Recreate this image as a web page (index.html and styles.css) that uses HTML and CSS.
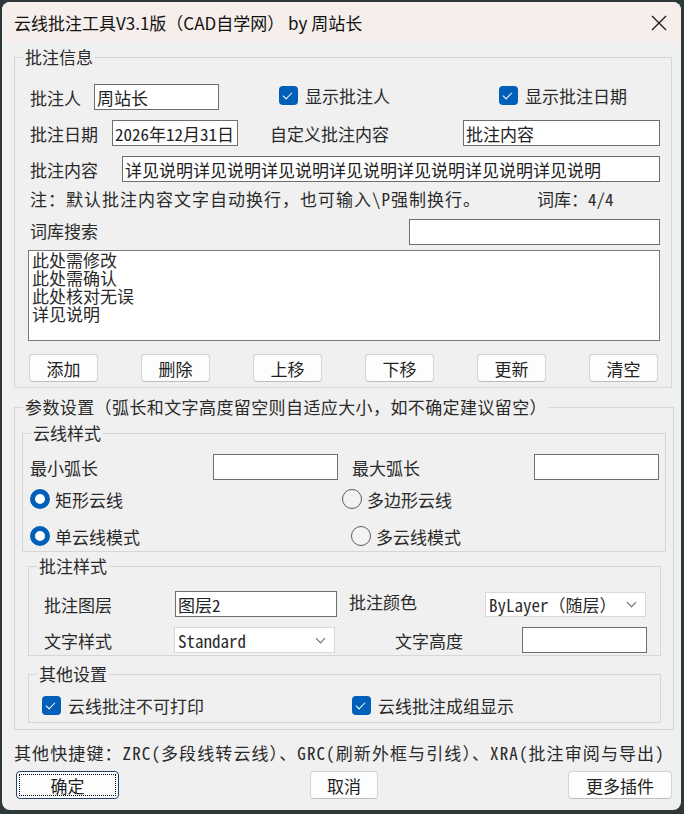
FILE: index.html
```html
<!DOCTYPE html>
<html lang="zh-CN">
<head>
    <meta charset="UTF-8">
    <meta name="viewport" content="width=device-width, initial-scale=1.0">
    <title>云线批注工具V3.1版</title>
    <link rel="stylesheet" href="styles.css">
</head>
<body>
    <div class="window">
        <div class="titlebar">
            <span class="title">云线批注工具V3.1版（CAD自学网） by 周站长</span>
            <svg class="close" width="16" height="16" viewBox="0 0 16 16"><path d="M1 1 L15 15 M15 1 L1 15" stroke="#1a1a1a" stroke-width="1.3" fill="none"/></svg>
        </div>

        <div class="content">
            <fieldset class="group g-info">
                <legend>批注信息</legend>
                <div class="row r1">
                    <span class="lbl" style="width:64px">批注人</span>
                    <input class="box" style="width:125px" type="text" value="周站长">
                    <label class="check" style="margin-left:60px;width:220px"><span class="cb"></span>显示批注人</label>
                    <label class="check"><span class="cb"></span>显示批注日期</label>
                </div>
                <div class="row r2">
                    <span class="lbl" style="width:82px">批注日期</span>
                    <input class="box" style="width:126px" type="text" value="2026年12月31日">
                    <span class="lbl" style="margin-left:32px;width:193px">自定义批注内容</span>
                    <input class="box" style="width:197px" type="text" value="批注内容">
                </div>
                <div class="row r3">
                    <span class="lbl" style="width:92px">批注内容</span>
                    <input class="box" style="width:538px" type="text" value="详见说明详见说明详见说明详见说明详见说明详见说明详见说明">
                </div>
                <div class="row note">
                    <span class="spaced" style="width:507px">注：默认批注内容文字自动换行，也可输入\P强制换行。</span>
                    <span>词库：4/4</span>
                </div>
                <div class="row r5">
                    <span class="lbl" style="width:379px">词库搜索</span>
                    <input class="box" style="width:251px" type="text">
                </div>
                <ul class="listbox">
                    <li>此处需修改</li>
                    <li>此处需确认</li>
                    <li>此处核对无误</li>
                    <li>详见说明</li>
                </ul>
                <div class="btnrow">
                    <button>添加</button>
                    <button>删除</button>
                    <button>上移</button>
                    <button>下移</button>
                    <button>更新</button>
                    <button>清空</button>
                </div>
            </fieldset>

            <fieldset class="group g-param">
                <legend class="spaced-s">参数设置（弧长和文字高度留空则自适应大小，如不确定建议留空）</legend>

                <fieldset class="group sub s-cloud">
                    <legend>云线样式</legend>
                    <div class="row c1">
                        <span class="lbl" style="width:183px">最小弧长</span>
                        <input class="box" style="width:125px" type="text">
                        <span class="lbl" style="margin-left:14px;width:182px">最大弧长</span>
                        <input class="box" style="width:125px" type="text">
                    </div>
                    <div class="row c2">
                        <label class="radio" style="width:312px"><span class="rb on"></span>矩形云线</label>
                        <label class="radio"><span class="rb"></span>多边形云线</label>
                    </div>
                    <div class="row c3">
                        <label class="radio" style="width:321px"><span class="rb on"></span>单云线模式</label>
                        <label class="radio"><span class="rb"></span>多云线模式</label>
                    </div>
                </fieldset>

                <fieldset class="group sub s-note">
                    <legend>批注样式</legend>
                    <div class="row n1">
                        <span class="lbl" style="width:131px">批注图层</span>
                        <input class="box" style="width:162px" type="text" value="图层2">
                        <span class="lbl up" style="margin-left:12px;width:136px">批注颜色</span>
                        <div class="select" style="width:161px">ByLayer（随层）<span class="chev"></span></div>
                    </div>
                    <div class="row n2">
                        <span class="lbl" style="width:130px">文字样式</span>
                        <div class="select" style="width:161px">Standard<span class="chev"></span></div>
                        <span class="lbl" style="margin-left:60px;width:127px">文字高度</span>
                        <input class="box" style="width:125px" type="text">
                    </div>
                </fieldset>

                <fieldset class="group sub s-other">
                    <legend>其他设置</legend>
                    <div class="row o1">
                        <label class="check" style="width:310px"><span class="cb"></span>云线批注不可打印</label>
                        <label class="check"><span class="cb"></span>云线批注成组显示</label>
                    </div>
                </fieldset>
            </fieldset>

            <p class="shortcut">其他快捷键：ZRC(多段线转云线）、GRC(刷新外框与引线）、XRA(批注审阅与导出)</p>

            <div class="footer">
                <button class="ok">确定</button>
                <button class="cancel">取消</button>
                <button class="more">更多插件</button>
            </div>
        </div>
    </div>
</body>
</html>
```

FILE: styles.css
```css
html, body {
    margin: 0;
    padding: 0;
}
body {
    background: #2d3838;
    font-family: "Noto Sans Mono CJK SC", "Noto Sans CJK SC", sans-serif;
    font-size: 17px;
    color: #2a2a2a;
}
.window {
    margin: 2px 3px 0 2px;
    height: 808px;
    background: #f0f0f0;
    border-radius: 8px;
    overflow: hidden;
}
.titlebar {
    height: 40px;
    background: #f6eeea;
    display: flex;
    align-items: center;
    justify-content: space-between;
    padding: 0 14px 0 12px;
}
.title {
    font-family: "Noto Sans CJK SC", sans-serif;
    font-size: 17px;
    color: #111;
}
.close {
    margin-top: 1px;
}
.content {
    padding: 0 0 0 12px;
}
.spaced {
    letter-spacing: 1px;
}
.spaced-s {
    letter-spacing: 0.4px;
}
.group {
    margin: 0;
    padding: 0;
    border: 1px solid #d6d6d6;
    min-width: 0;
}
.group legend {
    margin-left: 8px;
    padding: 0 2px;
    line-height: 22px;
    height: 22px;
}
.g-info {
    margin-top: 4px;
    width: 656px;
    padding-bottom: 5px;
}
.row {
    display: flex;
    align-items: center;
    height: 26px;
    white-space: nowrap;
}
.lbl {
    display: inline-block;
    flex: none;
}
.box {
    box-sizing: border-box;
    height: 26px;
    margin: 0;
    padding: 0 2px;
    border: 1px solid #6e6e6e;
    background: #fff;
    font: inherit;
    color: #222;
    outline: none;
    flex: none;
}
.r1 { margin-top: 16px; padding-left: 15px; }
.r2 { margin-top: 10px; padding-left: 15px; }
.r3 { margin-top: 10px; padding-left: 15px; }
.note { margin-top: 5px; height: 22px; padding-left: 15px; }
.r5 { margin-top: 10px; padding-left: 15px; }
.r5 .lbl { margin-top: -4px; }
.check, .radio {
    display: flex;
    align-items: center;
    flex: none;
}
.r1 .check {
    align-self: flex-start;
    margin-top: -1px;
}
.cb {
    width: 19px;
    height: 19px;
    border-radius: 4px;
    background: #005fb8;
    margin-right: 7px;
    position: relative;
    flex: none;
}
.cb::after {
    content: "";
    position: absolute;
    left: 6px;
    top: 4px;
    width: 4px;
    height: 8px;
    border: solid #fff;
    border-width: 0 1.3px 1.3px 0;
    transform: rotate(45deg);
}
.rb {
    box-sizing: border-box;
    width: 20px;
    height: 20px;
    border-radius: 50%;
    border: 1px solid #5e5e5e;
    background: #f3f3f3;
    margin-right: 5px;
    flex: none;
}
.rb.on {
    border: 5.5px solid #005fb8;
    background: #fff;
}
.listbox {
    list-style: none;
    box-sizing: border-box;
    margin: 5px 0 0 13px;
    padding: 0 3px;
    width: 632px;
    height: 91px;
    background: #fff;
    border: 1px solid #7a7a7a;
    line-height: 18px;
}
.btnrow {
    display: flex;
    gap: 43px;
    margin-top: 13px;
    padding-left: 14px;
}
button {
    box-sizing: border-box;
    height: 28px;
    width: 69px;
    padding: 0;
    background: #fdfdfd;
    border: 1px solid #d3d3d3;
    border-bottom-color: #bdbdbd;
    border-radius: 4px;
    font: inherit;
    color: #222;
}
.g-param {
    margin-top: 8px;
    width: 658px;
    padding-bottom: 6px;
}
.sub {
    margin-left: 7px;
}
.sub legend {
    margin-left: 8px;
}
.s-cloud {
    margin-top: 4px;
    width: 642px;
    padding-bottom: 4px;
}
.c1 { margin-top: 10px; padding-left: 7px; }
.c2 { margin-top: 8px; height: 22px; padding-left: 7px; }
.c3 { margin-top: 15px; height: 22px; padding-left: 7px; }
.s-note {
    margin-top: 3px;
    margin-left: 13px;
    width: 631px;
    padding-bottom: 2px;
}
.n1 { margin-top: 14px; padding-left: 15px; }
.n1 .up { margin-top: -5px; }
.n2 { margin-top: 10px; padding-left: 15px; }
.select {
    box-sizing: border-box;
    height: 26px;
    background: #fff;
    border: 1px solid #d9d9d9;
    padding: 0 0 0 3px;
    display: flex;
    align-items: center;
    justify-content: space-between;
    flex: none;
    overflow: hidden;
}
.n1 .select { height: 25px; }
.chev {
    width: 6px;
    height: 6px;
    border: solid #666;
    border-width: 0 1px 1px 0;
    transform: rotate(45deg);
    margin: -4px 10px 0 0;
    flex: none;
}
.s-other {
    margin-top: 7px;
    margin-left: 13px;
    width: 631px;
    padding-bottom: 7px;
}
.o1 { margin-top: 10px; height: 20px; padding-left: 13px; }
.shortcut {
    margin: 12px 0 0 0;
    line-height: 22px;
    white-space: nowrap;
    letter-spacing: 1.1px;
}
.footer {
    display: flex;
    margin-top: 7px;
    padding-left: 2px;
}
.footer .ok {
    width: 103px;
    border: 1px solid #23436f;
    outline: 1px dotted #000;
    outline-offset: -4px;
}
.footer .cancel {
    width: 68px;
    margin-left: 191px;
}
.footer .more {
    width: 104px;
    margin-left: 190px;
}
```
